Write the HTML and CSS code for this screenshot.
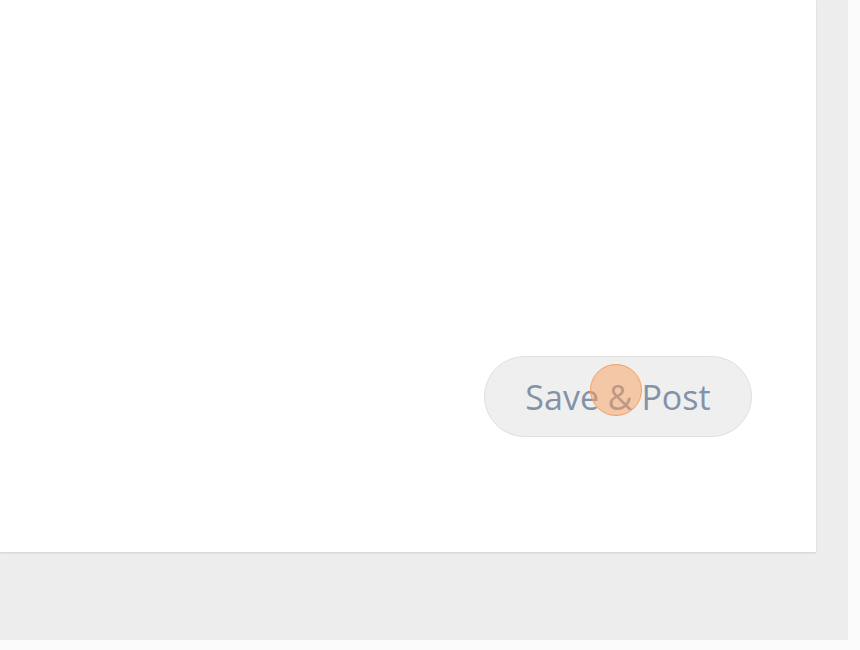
FILE: index.html
```html
<!DOCTYPE html>
<html>
<head>
<meta charset="utf-8">
<link rel="stylesheet" href="styles.css">
</head>
<body>
<div class="frame">
  <div class="card">
    <div class="actions">
      <button class="btn">Save &amp; Post<span class="tap"></span></button>
    </div>
  </div>
</div>
</body>
</html>
```
FILE: styles.css
```css
html, body {
  margin: 0;
  padding: 0;
  background: #fbfbfb;
}
.frame {
  width: 848px;
  height: 640px;
  background: #eeeded;
  box-sizing: border-box;
}
.card {
  width: 816px;
  height: 552px;
  background: #ffffff;
  box-shadow: 0 1px 2px rgba(0,0,0,0.12);
  box-sizing: border-box;
  display: flex;
  flex-direction: column;
  justify-content: flex-end;
  padding: 0 64px 115px 0;
}
.actions {
  display: flex;
  justify-content: flex-end;
}
.btn {
  position: relative;
  width: 268px;
  height: 81px;
  border-radius: 41px;
  border: 1.5px solid #e0dfdf;
  background: #f0efef;
  color: #8293a8;
  font-family: "Open Sans", sans-serif;
  font-size: 34px;
  padding: 0;
  letter-spacing: 0;
}
.tap {
  position: absolute;
  left: 105px;
  top: 7px;
  width: 52px;
  height: 52px;
  border-radius: 50%;
  background: rgba(247, 160, 95, 0.5);
  border: 1.5px solid #f2a062;
  box-sizing: border-box;
}
```
